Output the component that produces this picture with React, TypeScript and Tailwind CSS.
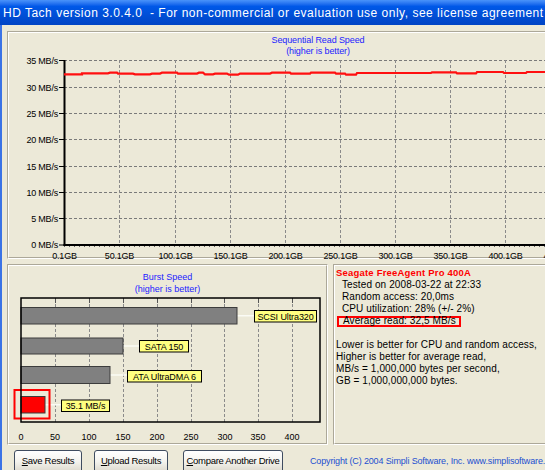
import React from "react";

const FONT = "'Liberation Sans', Arial, sans-serif";

const yLabels = ["35 MB/s", "30 MB/s", "25 MB/s", "20 MB/s", "15 MB/s", "10 MB/s", "5 MB/s", "0 MB/s"];
const gridY = [60.5, 87.5, 113.5, 139.5, 166.5, 192.5, 218.5, 245];
const gridX = [119.5, 175.5, 230.5, 285.5, 340.5, 395.5, 450.5, 505.5, 560.5, 615.5];
const xLabels = ["0.1GB", "50.1GB", "100.1GB", "150.1GB", "200.1GB", "250.1GB", "300.1GB", "350.1GB", "400.1GB", "450.1GB", "500.1GB"];

const linePts: [number, number][] = [
  [64, 74.3], [82, 74.3], [82, 73.3], [108, 73.3], [110, 72.7], [117, 72.7], [118, 73.6], [133, 73.6],
  [135, 74.3], [150, 74.3], [152, 73.6], [160, 73.6], [162, 72.7], [177, 72.7], [178, 73.6], [197, 73.6],
  [199, 72.7], [203, 72.7], [205, 74.3], [213, 74.3], [215, 73.6], [227, 73.6], [229, 74.7], [238, 74.7],
  [240, 73.6], [270, 73.6], [272, 72.7], [290, 72.7], [291, 73.6], [310, 73.6], [311, 72.7], [335, 72.7],
  [336, 73.6], [345, 73.6], [346, 74.7], [356, 74.7], [357, 73], [431, 73], [432, 72.4], [456, 72.4],
  [457, 73.3], [476, 73.3], [477, 72], [503, 72], [504, 73], [526, 73], [527, 72], [560, 72], [600, 72.5], [620, 72.5],
];

function ReadChart() {
  return (
    <svg width={618} height={200} viewBox="9 57 618 200" className="block overflow-visible" fontFamily={FONT}>
      {gridY.slice(0, 7).map((y, i) => (
        <line key={"h" + i} x1={64} x2={622} y1={y} y2={y} stroke="#7a7a7a" strokeDasharray="3 2" />
      ))}
      {gridX.map((x, i) => (
        <line key={"v" + i} x1={x} x2={x} y1={60} y2={244} stroke="#8a8a8a" strokeDasharray="3 2" />
      ))}
      {gridY.map((y, i) => (
        <line key={"t" + i} x1={59} x2={64} y1={y} y2={y} stroke="#000" />
      ))}
      {yLabels.map((l, i) => (
        <text key={"yl" + i} x={58} y={gridY[i] + 3.3} fontSize={9} textAnchor="end" fill="#000" letterSpacing={-0.2}>
          {l}
        </text>
      ))}
      <line x1={64} x2={622} y1={246.5} y2={246.5} stroke="#666" strokeDasharray="1 4" />
      <line x1={64.5} x2={64.5} y1={60} y2={246} stroke="#000" strokeWidth={2} />
      <line x1={63.5} x2={622} y1={245} y2={245} stroke="#000" strokeWidth={2} />
      <polyline
        points={linePts.map((p) => p.join(",")).join(" ")}
        fill="none"
        stroke="#ff1010"
        strokeWidth={2.2}
      />
      {xLabels.map((l, i) => (
        <text key={"xl" + i} x={i === 0 ? 64.5 : gridX[i - 1]} y={258.5} fontSize={9} textAnchor="middle" fill="#000" letterSpacing={-0.2}>
          {l}
        </text>
      ))}
    </svg>
  );
}

const bGridX = [55.5, 89.5, 123.5, 157.5, 191.5, 224.5, 258.5, 292.5];
const bLabelX = [21, 55, 89, 123, 157, 191, 225, 258, 292];

function BurstChart() {
  const bars = [
    { x2: 237, y: 308.5, h: 16.5, fill: "#808080", lx: 254, lw: 62, ly: 311.5, label: "SCSI Ultra320" },
    { x2: 123, y: 339, h: 16, fill: "#808080", lx: 139, lw: 49, ly: 341.5, label: "SATA 150" },
    { x2: 110, y: 367.5, h: 17, fill: "#808080", lx: 127, lw: 74, ly: 371.5, label: "ATA UltraDMA 6" },
    { x2: 45, y: 397.5, h: 16.5, fill: "#ff0000", lx: 61, lw: 48, ly: 401, label: "35.1 MB/s" },
  ];
  return (
    <svg width={317} height={148} viewBox="9 296 317 148" className="block overflow-visible" fontFamily={FONT}>
      {bGridX.map((x, i) => (
        <g key={"g" + i}>
          <line x1={x} x2={x} y1={300} y2={423} stroke="#8a8a8a" strokeDasharray="3 2" />
          <line x1={x} x2={x} y1={299} y2={304} stroke="#555" />
        </g>
      ))}
      {bars.map((b, i) => (
        <g key={"b" + i}>
          <line x1={b.x2} x2={b.lx} y1={b.y + b.h / 2} y2={b.y + b.h / 2} stroke="#fbfbf5" strokeWidth={1.5} />
          <rect x={21} y={b.y} width={b.x2 - 21} height={b.h} fill={b.fill} stroke="#3c3c3c" strokeWidth={1} />
          <rect x={b.lx + 0.5} y={b.ly} width={b.lw} height={11.5} fill="#ffff80" stroke="#000" strokeWidth={1} />
          <text x={b.lx + 0.5 + b.lw / 2} y={b.ly + 9} fontSize={9} textAnchor="middle" fill="#000" letterSpacing={-0.1}>
            {b.label}
          </text>
        </g>
      ))}
      <rect x={14.5} y={391} width={35} height={28.5} fill="none" stroke="#ff0000" strokeWidth={2} />
      <rect x={21} y={299} width={299} height={124} fill="none" stroke="#000" strokeWidth={1.5} />
      {bLabelX.map((x, i) => (
        <text key={"bl" + i} x={x} y={440.5} fontSize={9} textAnchor="middle" fill="#000">
          {String(i * 50)}
        </text>
      ))}
    </svg>
  );
}

function Etched({ className, children }: { className: string; children?: React.ReactNode }) {
  return (
    <div className={"border border-t-[#ACA899] border-l-[#ACA899] border-r-white border-b-white " + className}>
      <div className="h-full border border-t-white border-l-white border-r-[#ACA899] border-b-[#ACA899]">{children}</div>
    </div>
  );
}

function XpButton({ w, children }: { w: string; children: React.ReactNode }) {
  return (
    <div
      className={
        "h-[23px] shrink-0 rounded-[3px] border border-[#3f4c60] bg-linear-to-b from-white via-[#f4f3ee] to-[#dcd8cc] flex items-center justify-center whitespace-nowrap text-[9.5px] text-black tracking-[-0.3px] " +
        w
      }
    >
      {children}
    </div>
  );
}

export default function App() {
  return (
    <div className="w-[545px] h-[470px] overflow-hidden bg-[#ECE9D8] font-['Liberation_Sans',Arial,sans-serif]">
      <div className="w-[640px] h-full flex flex-col">
        <div className="h-[25px] shrink-0 bg-linear-to-b from-[#4a93fa] via-[#0058e8] via-25% to-[#0044c4] flex items-center pl-[3px] pt-[1px]">
          <span className="text-white text-[12px] whitespace-pre tracking-[0.5px]">
            HD Tach version 3.0.4.0  - For non-commercial or evaluation use only, see license agreement
          </span>
        </div>
        <div className="flex-1 border-l-2 border-[#3b73e6] pl-[5px] pt-[6px] flex flex-col">
          <Etched className="w-[622px] h-[228px]">
            <div className="pt-[2px] flex flex-col items-center text-[9px] leading-[11px] text-[#2323ff] tracking-[-0.1px]">
              <div>Sequential Read Speed</div>
              <div>(higher is better)</div>
            </div>
            <ReadChart />
          </Etched>
          <div className="flex mt-[5px] gap-[5px]">
            <Etched className="w-[321px] h-[181px]">
              <div className="pt-[5px] flex flex-col items-center text-[9px] leading-[12px] text-[#2323ff]">
                <div>Burst Speed</div>
                <div>(higher is better)</div>
              </div>
              <BurstChart />
            </Etched>
            <Etched className="w-[296px] h-[181px]">
              <div className="pt-[1px] text-[10px] leading-[12px] text-black tracking-[0.1px]">
                <div className="pl-[1px] text-[#ff0000] font-bold text-[9.5px] tracking-[0.2px]">Seagate FreeAgent Pro 400A</div>
                <div className="pl-[7px]">Tested on 2008-03-22 at 22:33</div>
                <div className="pl-[7px]">Random access: 20,0ms</div>
                <div className="pl-[7px]">CPU utilization: 28% (+/- 2%)</div>
                <div className="h-[12px] flex items-center pl-[2px]">
                  <span className="h-[11px] w-fit border-2 border-[#ff0000] flex items-center pl-[4px] pr-[3px] leading-none whitespace-nowrap">
                    Average read: 32,5 MB/s
                  </span>
                </div>
                <div className="h-[12px]" />
                <div className="pl-[1px]">Lower is better for CPU and random access,</div>
                <div className="pl-[1px]">Higher is better for average read,</div>
                <div className="pl-[1px]">MB/s = 1,000,000 bytes per second,</div>
                <div className="pl-[1px]">GB = 1,000,000,000 bytes.</div>
              </div>
            </Etched>
          </div>
          <div className="flex items-center mt-[5px] h-[23px] pl-[7px]">
            <XpButton w="w-[68px]">
              <span className="underline">S</span>ave Results
            </XpButton>
            <div className="w-[12px] shrink-0" />
            <XpButton w="w-[74px]">
              <span className="underline">U</span>pload Results
            </XpButton>
            <div className="w-[15px] shrink-0" />
            <XpButton w="w-[100px]">
              <span className="underline">C</span>ompare Another Drive
            </XpButton>
            <div className="ml-[27px] text-[9px] text-[#1c4fd0] whitespace-nowrap tracking-[-0.15px]">
              Copyright (C) 2004 Simpli Software, Inc. www.simplisoftware.com
            </div>
          </div>
        </div>
      </div>
    </div>
  );
}
